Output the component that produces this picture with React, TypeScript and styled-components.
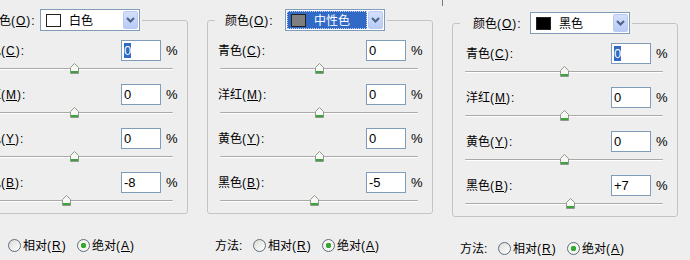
import styled, { createGlobalStyle } from 'styled-components';

const GlobalStyle = createGlobalStyle`
  body {
    margin: 0;
    background: #eeeeee;
    font-family: "Noto Sans CJK SC", "Liberation Sans", sans-serif;
    font-size: 12px;
    line-height: 14px;
    color: #000;
  }
`;

type Value = { text: string; num: number; selected?: boolean };

type PanelData = {
  name: string;
  swatch: string;
  active: boolean;
  shift: number;
  drop: number;
  titleIndent: number;
  indent: number;
  values: Value[];
};

const channels = [
  ['青色', 'C'],
  ['洋红', 'M'],
  ['黄色', 'Y'],
  ['黑色', 'B'],
];

const panels: PanelData[] = [
  {
    name: '白色',
    swatch: '#ffffff',
    active: false,
    shift: -38,
    drop: 0,
    titleIndent: 7,
    indent: 4,
    values: [
      { text: '0', num: 0, selected: true },
      { text: '0', num: 0 },
      { text: '0', num: 0 },
      { text: '-8', num: -8 },
    ],
  },
  {
    name: '中性色',
    swatch: '#7f7f7f',
    active: true,
    shift: 0,
    drop: 0,
    titleIndent: 0,
    indent: 0,
    values: [
      { text: '0', num: 0 },
      { text: '0', num: 0 },
      { text: '0', num: 0 },
      { text: '-5', num: -5 },
    ],
  },
  {
    name: '黑色',
    swatch: '#000000',
    active: false,
    shift: 0,
    drop: 3,
    titleIndent: 3,
    indent: 3,
    values: [
      { text: '0', num: 0, selected: true },
      { text: '0', num: 0 },
      { text: '0', num: 0 },
      { text: '+7', num: 7 },
    ],
  },
];

const TRACK = 198;
const THUMB = 9;

const App = () => {
  return (
    <>
      <GlobalStyle />
      <Page>
        {panels.map((p) => (
          <Panel key={p.name} $shift={p.shift} $drop={p.drop}>
            <Group>
              <Legend>
                <LegendInner>
                  <FieldLabel $indent={p.titleIndent}>
                    颜色<Key>(<u>O</u>):</Key>
                  </FieldLabel>
                  <Select>
                    <Choice $active={p.active}>
                      <Swatch $color={p.swatch} />
                      <span>{p.name}</span>
                    </Choice>
                    <ArrowButton>
                      <svg width="9" height="6" viewBox="0 0 9 6">
                        <path d="M1 1 L4.5 4.5 L8 1" fill="none" stroke="#4d6185" strokeWidth="2" />
                      </svg>
                    </ArrowButton>
                  </Select>
                </LegendInner>
              </Legend>
              {channels.map(([label, key], i) => {
                const v = p.values[i];
                const left = TRACK / 2 + v.num * (TRACK / 200) - THUMB / 2;
                return (
                  <Row key={key}>
                    <Line>
                      <RowLabel $indent={p.indent}>
                        {label}
                        <Key>
                          (<u>{key}</u>):
                        </Key>
                      </RowLabel>
                      <Field>{v.selected ? <Selected>{v.text}</Selected> : v.text}</Field>
                      <Percent>%</Percent>
                    </Line>
                    <Track>
                      <Thumb style={{ left }} width={THUMB} height="11" viewBox="0 0 9 11">
                        <path d="M0.5 4.5 L4.5 0.5 L8.5 4.5 V10.5 H0.5 Z" fill="#f7f7f4" stroke="#8d9a8d" />
                        <rect x="1" y="8" width="7" height="2" fill="#3ea33e" />
                      </Thumb>
                    </Track>
                  </Row>
                );
              })}
            </Group>
            <MethodRow>
              <MethodLabel>
                方法<Key>:</Key>
              </MethodLabel>
              <Radio $checked={false} />
              <RadioLabel>
                相对<Key>(<u>R</u>)</Key>
              </RadioLabel>
              <Radio $checked />
              <RadioLabel>
                绝对<Key>(<u>A</u>)</Key>
              </RadioLabel>
            </MethodRow>
          </Panel>
        ))}
      </Page>
    </>
  );
};

export default App;

const Page = styled.div`
  position: relative;
  width: 690px;
  height: 260px;
  overflow: hidden;
  display: flex;
  gap: 19px;
  padding-top: 9px;
  box-sizing: border-box;

  &::after {
    content: '';
    position: absolute;
    left: 442px;
    top: 0;
    width: 1px;
    height: 6px;
    background: #7a7a7a;
  }
`;

const Panel = styled.div<{ $shift: number; $drop: number }>`
  flex: 0 0 226px;
  margin-left: ${(p) => p.$shift}px;
  margin-top: ${(p) => p.$drop}px;
  display: flex;
  flex-direction: column;
`;

const Group = styled.fieldset`
  margin: 0;
  padding: 0 11px 0 10px;
  border: 1px solid #c4c4c0;
  border-radius: 3px;
  min-inline-size: 0;
`;

const Legend = styled.legend`
  padding: 0 2px 0 10px;
  margin-left: -3px;
`;

const LegendInner = styled.div`
  display: flex;
  align-items: center;
  gap: 8px;
`;

/* latin part of a label: SimSun half-width glyphs are wider than Noto's */
const Key = styled.span`
  font-family: "Liberation Sans", sans-serif;
  letter-spacing: 1px;
`;

const FieldLabel = styled.span<{ $indent: number }>`
  margin-left: ${(p) => p.$indent}px;
  width: ${(p) => 52 - p.$indent}px;
  white-space: nowrap;
`;

const Select = styled.div`
  width: 100px;
  height: 22px;
  box-sizing: border-box;
  border: 1px solid #7f9db9;
  background: #fff;
  display: flex;
  align-items: center;
  padding: 1px;
  gap: 1px;
`;

const Choice = styled.div<{ $active: boolean }>`
  flex: 1;
  height: 100%;
  box-sizing: border-box;
  display: flex;
  align-items: center;
  gap: 8px;
  padding-left: 4px;
  background: ${(p) => (p.$active ? '#3169c6' : 'transparent')};
  color: ${(p) => (p.$active ? '#fff' : '#000')};
  outline: ${(p) => (p.$active ? '1px dotted #c8d4ec' : 'none')};
  outline-offset: -1px;
`;

const Swatch = styled.span<{ $color: string }>`
  width: 15px;
  height: 13px;
  box-sizing: border-box;
  border: 1px solid #222;
  background: ${(p) => p.$color};
`;

const ArrowButton = styled.div`
  width: 15px;
  height: 100%;
  box-sizing: border-box;
  border: 1px solid #b9c9ef;
  border-radius: 2px;
  background: linear-gradient(#d4e0fc, #b8cbf6);
  display: flex;
  align-items: center;
  justify-content: center;
`;

const Row = styled.div`
  height: 44px;
  display: flex;
  flex-direction: column;

  &:nth-of-type(1) {
    margin-top: 9px;
  }

  &:last-of-type {
    height: 41px;
  }
`;

const Line = styled.div`
  height: 21px;
  display: flex;
  align-items: center;
  gap: 5px;
`;

const RowLabel = styled.span<{ $indent: number }>`
  flex: 1;
  padding-left: ${(p) => p.$indent}px;
  white-space: nowrap;
`;

const Field = styled.div`
  width: 40px;
  height: 21px;
  box-sizing: border-box;
  border: 1px solid #7f9db9;
  background: #fff;
  padding: 2px 2px 0;
  line-height: 15px;
  font-family: "Liberation Sans", sans-serif;
  font-size: 13px;
`;

const Selected = styled.span`
  background: #3169c6;
  color: #fff;
`;

const Percent = styled.span`
  width: 10px;
  font-family: "Liberation Sans", sans-serif;
  font-size: 13px;
`;

const Track = styled.div`
  position: relative;
  margin: 7px 3px 0 2px;
  height: 0;
  border-top: 1px solid #a9a9a9;
  border-bottom: 1px solid #ffffff;
  border-radius: 1px;
`;

const Thumb = styled.svg`
  position: absolute;
  top: -6px;
  display: block;
`;

const MethodRow = styled.div`
  margin-top: 23px;
  height: 16px;
  display: flex;
  align-items: center;
  padding-left: 8px;
`;

const MethodLabel = styled.span`
  width: 38px;
`;

const Radio = styled.span<{ $checked: boolean }>`
  width: 13px;
  height: 13px;
  box-sizing: border-box;
  border-radius: 50%;
  border: 1px solid #5c6d80;
  background: ${(p) =>
    p.$checked
      ? 'radial-gradient(circle, #36a832 0 2.5px, #f4f4f0 3px)'
      : 'linear-gradient(135deg, #dcdcd6, #ffffff)'};
`;

const RadioLabel = styled.span`
  margin-left: 2px;
  margin-right: 12px;
  width: 42px;
  white-space: nowrap;
`;
